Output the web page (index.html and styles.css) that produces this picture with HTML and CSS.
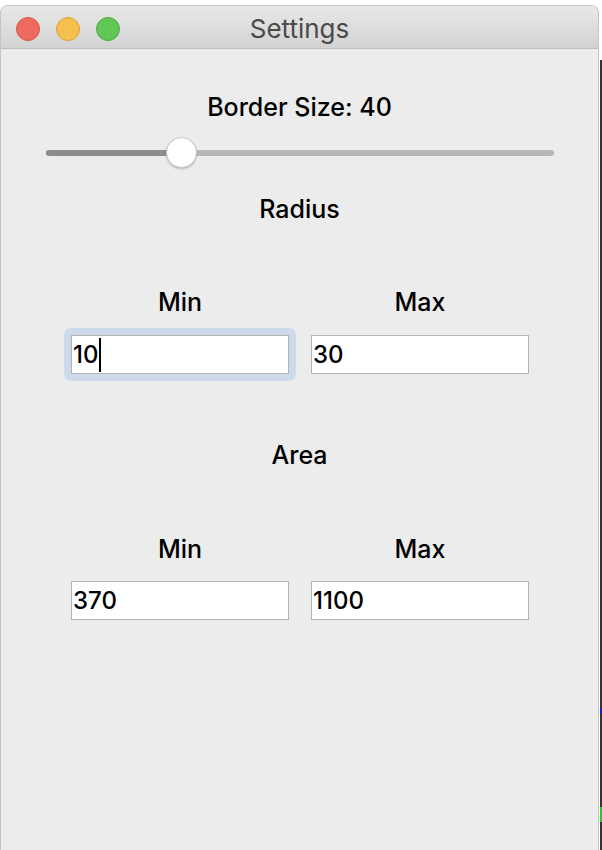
FILE: index.html
```html
<!DOCTYPE html>
<html>
<head>
<meta charset="utf-8">
<title>Settings</title>
<link rel="stylesheet" href="styles.css">
</head>
<body>
<div class="screen">
  <div class="window">
    <div class="titlebar">
      <div class="lights">
        <span class="light red"></span>
        <span class="light yellow"></span>
        <span class="light green"></span>
      </div>
      <div class="title">Settings</div>
      <div></div>
    </div>
    <div class="content">
      <div class="heading">Border Size: 40</div>
      <div class="slider">
        <div class="track">
          <div class="fill" style="width: 135px"></div>
          <div class="thumb" style="left: 135px"></div>
        </div>
      </div>
      <div class="section">Radius</div>
      <div class="pair pair-radius">
        <div class="field-col">
          <div class="label">Min</div>
          <div class="field focused"><span class="value">10</span><span class="caret"></span></div>
        </div>
        <div class="field-col">
          <div class="label">Max</div>
          <div class="field"><span class="value">30</span></div>
        </div>
      </div>
      <div class="section section-area">Area</div>
      <div class="pair pair-area">
        <div class="field-col">
          <div class="label">Min</div>
          <div class="field"><span class="value">370</span></div>
        </div>
        <div class="field-col">
          <div class="label">Max</div>
          <div class="field"><span class="value">1100</span></div>
        </div>
      </div>
    </div>
  </div>
  <div class="behind">
    <span class="mark blue"></span>
    <span class="mark green-mark"></span>
  </div>
</div>
</body>
</html>
```
FILE: styles.css
```css
* { box-sizing: border-box; }
html, body {
  margin: 0;
  padding: 0;
  background: #ffffff;
  width: 602px;
  height: 850px;
  overflow: hidden;
}
body {
  font-family: "Inter", "Liberation Sans", sans-serif;
  color: #000;
}
.screen {
  display: flex;
  width: 602px;
  height: 850px;
}
.window {
  width: 599px;
  margin-top: 5px;
  height: 845px;
  background: #ececec;
  border-radius: 8px 8px 0 0;
  border: 1px solid #c4c4c4;
  border-bottom: none;
  display: flex;
  flex-direction: column;
  overflow: hidden;
}
.titlebar {
  height: 43px;
  flex: none;
  display: grid;
  grid-template-columns: 1fr auto 1fr;
  align-items: center;
  background: linear-gradient(#e8e8e8, #d3d3d3);
  border-bottom: 1px solid #bdbdbd;
}
.lights {
  display: flex;
  gap: 16px;
  padding-left: 15px;
  padding-top: 3px;
}
.light {
  width: 24px;
  height: 24px;
  border-radius: 50%;
  display: block;
}
.red { background: #ee6a5f; border: 1px solid #d8574c; }
.yellow { background: #f6c04f; border: 1px solid #daa33f; }
.green { background: #62c655; border: 1px solid #51a945; }
.title {
  font-size: 26px;
  line-height: 30px;
  color: #4a4a4a;
  padding-top: 3px;
}
.content {
  display: flex;
  flex-direction: column;
  align-items: center;
  padding-top: 44px;
}
.heading, .section, .label {
  font-size: 25px;
  line-height: 28px;
  font-weight: 500;
  text-align: center;
}
.slider {
  align-self: stretch;
  padding: 0 44px 0 45px;
  margin-top: 17px;
  height: 30px;
  display: flex;
  align-items: center;
}
.track {
  position: relative;
  width: 100%;
  height: 6px;
  border-radius: 3px;
  background: #b7b7b7;
}
.fill {
  height: 100%;
  border-radius: 3px 0 0 3px;
  background: #8d8d8d;
}
.thumb {
  position: absolute;
  top: 50%;
  width: 31px;
  height: 31px;
  margin-left: -15px;
  margin-top: -16px;
  border-radius: 50%;
  background: #ffffff;
  border: 1px solid #c8c8c8;
  box-shadow: 0 1px 2px rgba(0, 0, 0, 0.22);
}
.section {
  margin-top: 27px;
}
.pair {
  display: grid;
  grid-template-columns: 218px 218px;
  column-gap: 22px;
  padding-left: 1px;
  margin-top: 65px;
}
.section-area { margin-top: 67px; }
.pair-area { margin-top: 66px; }
.field-col {
  display: flex;
  flex-direction: column;
  align-items: stretch;
  isolation: isolate;
}
.label {
  margin-bottom: 19px;
}
.pair-area .label { margin-bottom: 18px; }
.field {
  position: relative;
  height: 39px;
  background: #ffffff;
  border: 1px solid #b4b4b4;
  display: flex;
  align-items: center;
  padding-left: 1px;
  font-size: 24px;
  font-weight: 500;
}
.field.focused::before {
  content: "";
  position: absolute;
  inset: -8px;
  border-radius: 7px;
  background: #cddaeb;
  z-index: -1;
}
.value {
  line-height: 28px;
}
.caret {
  display: block;
  width: 2px;
  height: 34px;
  background: #000;
  margin-left: 1px;
}
.behind {
  margin-left: 1px;
  margin-top: 60px;
  width: 2px;
  height: 790px;
  background: #333333;
  position: relative;
}
.mark {
  position: absolute;
  left: 0;
  width: 2px;
}
.blue { top: 648px; height: 6px; background: #1a1adc; }
.green-mark { top: 747px; height: 15px; background: #22cc22; }
```
